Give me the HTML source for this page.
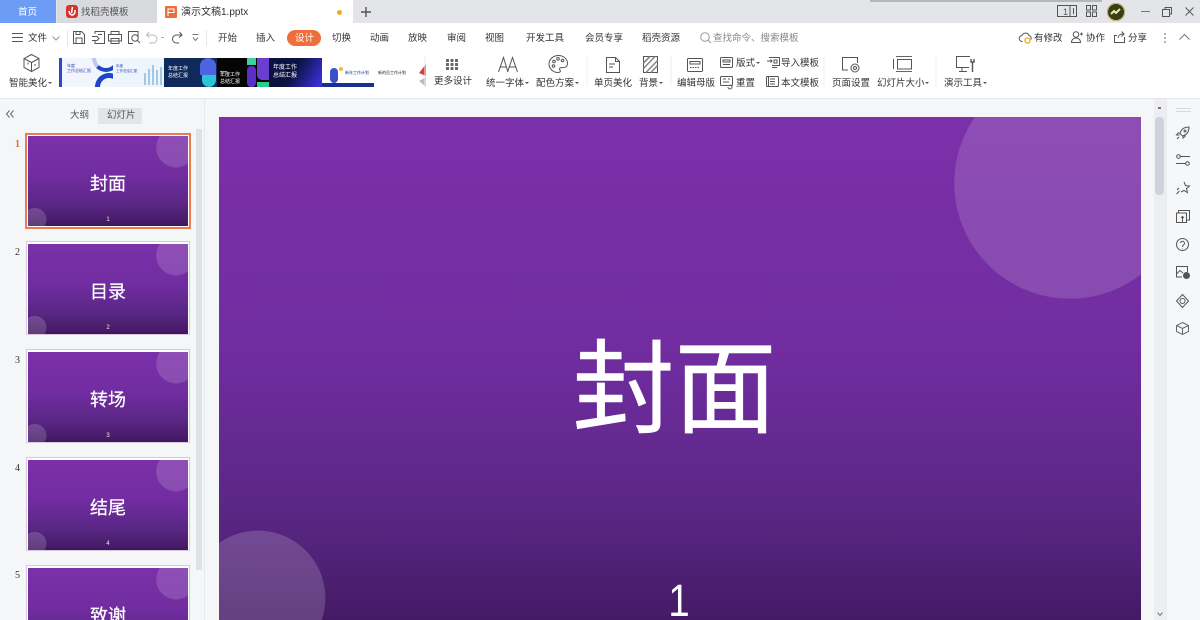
<!DOCTYPE html>
<html lang="zh-CN"><head><meta charset="utf-8"><title>演示文稿1.pptx</title>
<style>
html,body{margin:0;padding:0;width:1200px;height:620px;overflow:hidden;background:#f5f6f8}
body{position:relative;font-family:"Liberation Sans","Noto Sans CJK SC",sans-serif;color:#444;font-size:10px}
.a{position:absolute}
.t{position:absolute;white-space:nowrap;line-height:14px;font-size:9.500px;color:#444;margin-top:1px}
svg{position:absolute;overflow:visible;fill:none;stroke:#555;stroke-width:1}
.thumb{position:absolute;left:26px;width:162px;height:92px;border:1px solid #d6c9de;background:#fff;padding:0}
.slide{position:absolute;left:1px;top:2px;width:160px;height:90px;overflow:hidden;background:radial-gradient(circle 20px at 148px 11.500px,rgba(255,255,255,.15) 98%,transparent 100%),radial-gradient(circle 11.700px at 6.800px 83.500px,rgba(255,255,255,.17) 98%,transparent 100%),linear-gradient(#7b30a9 0,#722da1 43%,#632990 64%,#5a2785 76%,#451a65 97%,#3f1659 100%);background-size:160px 90px}
.slide b{position:absolute;left:0;right:0;top:34px;height:26px;text-align:center;font-weight:400;color:#fff;font-size:18px;line-height:26px;-webkit-text-stroke:.2px #fff;font-family:"Noto Sans CJK SC",sans-serif}
.slide u{position:absolute;left:0;right:0;top:80px;text-align:center;text-decoration:none;color:#eee;font-size:6px;line-height:8px}
.n{position:absolute;left:15px;font-size:10px;line-height:12px;color:#333;font-family:"Liberation Serif",serif}
.tmpl{position:absolute;top:58px;height:29px;overflow:hidden}
.tmpl .t{margin:0}
.dd{position:absolute;width:0;height:0;border:2px solid transparent;border-top:2px solid #555}
</style></head><body>

<!-- title bar -->
<div class="a" style="left:0;top:0;width:1200px;height:23px;background:#e3e5e9"></div>
<div class="a" style="left:0;top:0;width:56px;height:23px;background:#6d9cf5"></div>
<div class="t" style="left:18px;top:5px;color:#fff">首页</div>
<div class="a" style="left:57px;top:0;width:100px;height:23px;background:#d9dade"></div>
<div class="a" style="left:66px;top:5px;width:12px;height:13px;border-radius:3px;background:#d8322f"></div>
<svg style="left:66px;top:5px" width="12" height="13"><path d="M6.500 2 L5.500 8 M3 6 Q3.500 10 6.500 10 Q9.500 9 9 5" stroke="#fff" stroke-width="1.500"/></svg>
<div class="t" style="left:81px;top:5px;color:#555">找稻壳模板</div>
<div class="a" style="left:157px;top:0;width:196px;height:23px;background:#fff"></div>
<div class="a" style="left:165px;top:6px;width:12px;height:12px;background:#e8703f;border-radius:1px"></div>
<svg style="left:165px;top:6px" width="12" height="12"><path d="M3 10V3h6v3.500H3" stroke="#fff"/></svg>
<div class="t" style="left:181px;top:5px;color:#333;font-size:10px">演示文稿1.pptx</div>
<div class="a" style="left:337px;top:10px;width:5px;height:5px;border-radius:50%;background:#eeaa22"></div>
<svg style="left:360px;top:6px" width="12" height="12"><path d="M6 1v10M1 6h10" stroke="#555" stroke-width="1.400"/></svg>
<div class="a" style="left:870px;top:0;width:232px;height:2px;background:#b6b7ba"></div>
<svg style="left:1057px;top:5px" width="20" height="12"><rect x=".5" y=".5" width="19" height="11"/><path d="M13 .5v11M16.500 3v6"/></svg>
<div class="t" style="left:1063px;top:4px;font-size:9px;color:#555">1</div>
<svg style="left:1086px;top:5px" width="11" height="12"><rect x=".5" y=".5" width="4" height="4.500"/><rect x="6.500" y=".5" width="4" height="4.500"/><rect x=".5" y="7" width="4" height="4.500"/><rect x="6.500" y="7" width="4" height="4.500"/></svg>
<div class="a" style="left:1107px;top:3px;width:18px;height:18px;border-radius:50%;background:#3c3d10;box-shadow:0 0 0 1px #c5b97c inset"></div>
<svg style="left:1110px;top:7px" width="12" height="10"><path d="M1 7l3-3 2 2 4-4" stroke="#dfe8c8" stroke-width="2"/></svg>
<svg style="left:1141px;top:11px" width="9" height="2"><path d="M0 .5h9" stroke="#777"/></svg>
<svg style="left:1162px;top:7px" width="10" height="10"><rect x=".5" y="2.500" width="7" height="7"/><path d="M3 2.500V.5h6.500v6.500H7.500"/></svg>
<svg style="left:1185px;top:7px" width="9" height="9"><path d="M.5.500l8 8M8.500.500l-8 8"/></svg>

<!-- menu row -->
<div class="a" style="left:0;top:23px;width:1200px;height:75px;background:#fff"></div>
<svg style="left:12px;top:33px" width="11" height="9"><path d="M0 .5h11M0 4.500h11M0 8.500h11"/></svg>
<div class="t" style="left:28px;top:31px;color:#333">文件</div>
<svg style="left:52px;top:36px" width="8" height="5"><path d="M.5.500l3.500 3.500 3.500-3.500" stroke="#999"/></svg>
<svg style="left:67px;top:30px" width="1" height="16"><path d="M.5 0v16" stroke="#e6e6e6"/></svg>
<svg style="left:73px;top:31px" width="12" height="13"><path d="M.5.500h8l3 3v9H.500zM3 12.500V7h6v5.500M3 .5v3h4V.5"/></svg>
<svg style="left:92px;top:31px" width="13" height="13"><path d="M3 3V.5h9.500v12H3V10M0 5.500h5l2 2-2 2H0M6 3.500h4"/></svg>
<svg style="left:108px;top:31px" width="14" height="13"><path d="M3 3.500V.5h8v3M.5 3.500h13V10H.500zM3 7.500h8v5H3z"/></svg>
<svg style="left:128px;top:31px" width="13" height="13"><path d="M10 6V.5H.5v12H5"/><circle cx="7" cy="7" r="3.200"/><path d="M9.500 9.500l2.500 2.500"/></svg>
<svg style="left:146px;top:31px" width="13" height="13"><path d="M3 1L.5 4 3.500 6.500M1 4h6a4 4 0 0 1 0 8H3" stroke="#bbb"/></svg>
<svg style="left:161px;top:37px" width="4" height="2"><path d="M0 .5h3" stroke="#aaa"/></svg>
<svg style="left:171px;top:31px" width="12" height="13"><path d="M8.500 1l2.500 3-3 2.500M11 4H5.500a4 4 0 0 0 0 8H8"/></svg>
<svg style="left:192px;top:34px" width="7" height="8"><path d="M.5.500h6M1 3.500l2.500 3 2.500-3" stroke="#777"/></svg>
<svg style="left:206px;top:30px" width="1" height="16"><path d="M.5 0v16" stroke="#e6e6e6"/></svg>
<div class="t" style="left:218px;top:31px;color:#333">开始</div>
<div class="t" style="left:256px;top:31px;color:#333">插入</div>
<div class="a" style="left:287px;top:30px;width:34px;height:16px;border-radius:8px;background:#ef6f3c"></div>
<div class="t" style="left:295px;top:31px;color:#fff">设计</div>
<div class="t" style="left:332px;top:31px;color:#333">切换</div>
<div class="t" style="left:370px;top:31px;color:#333">动画</div>
<div class="t" style="left:408px;top:31px;color:#333">放映</div>
<div class="t" style="left:447px;top:31px;color:#333">审阅</div>
<div class="t" style="left:485px;top:31px;color:#333">视图</div>
<div class="t" style="left:526px;top:31px;color:#333">开发工具</div>
<div class="t" style="left:585px;top:31px;color:#333">会员专享</div>
<div class="t" style="left:642px;top:31px;color:#333">稻壳资源</div>
<svg style="left:700px;top:32px" width="12" height="12"><circle cx="5" cy="5" r="4.300" stroke="#999"/><path d="M8 8l3 3" stroke="#999"/></svg>
<div class="t" style="left:713px;top:31px;color:#888">查找命令、搜索模板</div>
<svg style="left:1019px;top:31px" width="13" height="13"><path d="M3.500 10.500a3 3 0 0 1-.5-6A3.800 3.800 0 0 1 10 4.500a3 3 0 0 1 2 4" stroke="#555"/><circle cx="8.500" cy="9.500" r="2.500" stroke="#eaa81c" stroke-width="1.300"/></svg>
<div class="t" style="left:1034px;top:31px;color:#333">有修改</div>
<svg style="left:1071px;top:31px" width="12" height="12"><circle cx="5" cy="3.500" r="2.800"/><path d="M.5 11.500c0-6 9-6 9 0zM9 3h3M10.500 1.500v3"/></svg>
<div class="t" style="left:1086px;top:31px;color:#333">协作</div>
<svg style="left:1114px;top:31px" width="12" height="12"><path d="M3 4.500H.5v7h10V6M4 7C4.500 4 6 3 9 3M7.500.500L10 3 7.500 5.500"/></svg>
<div class="t" style="left:1128px;top:31px;color:#333">分享</div>
<svg style="left:1164px;top:33px" width="2" height="10"><path d="M1 0v2M1 4v2M1 8v2" stroke="#666"/></svg>
<svg style="left:1179px;top:34px" width="11" height="6"><path d="M.5 5.500L5.500.5l5 5" stroke="#777"/></svg>

<!-- ribbon -->
<svg style="left:23px;top:54px" width="17" height="18"><path d="M8.500.5l7.500 4v9l-7.500 4-7.500-4v-9zM1 4.500l7.500 4 7.500-4M8.500 8.500v9"/><path d="M5 8.500v2M11 11h2" stroke="#555"/></svg>
<div class="t" style="left:9px;top:76px;color:#333">智能美化</div><div class="dd" style="left:48px;top:82px"></div>

<div class="tmpl" style="left:59px;width:54px;background:#f2f5fb">
 <div class="a" style="left:0;top:0;width:3px;height:29px;background:#2a48c9"></div>
 <div class="a" style="left:33px;top:-14px;width:20px;height:20px;border:4px solid #1d45c8;border-radius:50%;border-left-color:#bcc8ec;border-top-color:transparent;border-right-color:transparent"></div>
 <div class="a" style="left:36px;top:15px;width:18px;height:18px;border:5px solid #1d45c8;border-radius:50%;border-right-color:transparent;border-bottom-color:transparent"></div>
 <div class="t" style="left:8px;top:5px;font-size:4px;line-height:5px;color:#2a48c9">年度<br>工作总结汇报</div>
</div>
<div class="tmpl" style="left:113px;width:51px;background:#edf4fb">
 <div class="t" style="left:3px;top:6px;font-size:3.500px;line-height:5px;color:#2a48c9">年度<br>工作总结汇报</div>
 <svg style="left:30px;top:5px" width="20" height="22"><path d="M2 10v12M6 6v16M10 2v20M14 7v15M18 4v18" stroke="#a5c7e6" stroke-width="2"/></svg>
</div>
<div class="tmpl" style="left:164px;width:53px;background:#0f2a5a">
 <div class="a" style="left:36px;top:0;width:16px;height:17px;border-radius:8px 8px 0 0;background:#4d63e0"></div>
 <div class="a" style="left:38px;top:17px;width:14px;height:12px;background:#27c5d5;border-radius:0 0 7px 7px"></div>
 <div class="t" style="left:4px;top:8px;font-size:5px;line-height:7px;color:#fff">年度工作<br>总结汇报</div>
</div>
<div class="tmpl" style="left:217px;width:52px;background:#050505">
 <div class="a" style="left:30px;top:8px;width:9px;height:21px;background:#5c2ec9;border-radius:4px"></div>
 <div class="a" style="left:30px;top:0;width:9px;height:7px;background:#3ed29b"></div>
 <div class="a" style="left:40px;top:0;width:12px;height:22px;background:#6a3fd0;border-radius:0 0 0 5px"></div>
 <div class="a" style="left:40px;top:24px;width:12px;height:5px;background:#2fc98c"></div>
 <div class="a" style="left:3px;top:13px;width:7px;height:1px;background:#3ed29b"></div>
 <div class="t" style="left:3px;top:14px;font-size:5px;line-height:7px;color:#fff">年度工作<br>总结汇报</div>
</div>
<div class="tmpl" style="left:269px;width:53px;background:linear-gradient(120deg,#0b1240 45%,#3a2fd8 95%)">
 <div class="t" style="left:4px;top:6px;font-size:6px;line-height:8px;color:#fff">年度工作<br>总结汇报</div>
</div>
<div class="tmpl" style="left:322px;width:52px;background:#fff">
 <div class="a" style="left:0;top:25px;width:52px;height:4px;background:#1a2f92"></div>
 <div class="a" style="left:8px;top:10px;width:8px;height:15px;background:#3d4fc5;border-radius:4px"></div>
 <div class="a" style="left:17px;top:9px;width:4px;height:4px;background:#efbf2e;border-radius:50%"></div>
 <div class="t" style="left:23px;top:12px;font-size:4px;line-height:6px;color:#1a2f92">新年工作计划</div>
</div>
<div class="tmpl" style="left:374px;width:44px;background:#fff">
 <div class="t" style="left:4px;top:12px;font-size:4px;line-height:6px;color:#222">新的员工作计划</div>
</div>
<svg style="left:419px;top:64px" width="8" height="24"><path d="M7 0L0 9l7 3z" fill="#d8403c" stroke="none"/><path d="M7 13L0 17l7 6z" fill="#bdbdbd" stroke="none"/></svg>

<svg style="left:446px;top:59px" width="12" height="11"><g fill="#666" stroke="none"><rect width="3" height="3" rx=".6"/><rect x="4.500" width="3" height="3" rx=".6"/><rect x="9" width="3" height="3" rx=".6"/><rect y="4" width="3" height="3" rx=".6"/><rect x="4.500" y="4" width="3" height="3" rx=".6"/><rect x="9" y="4" width="3" height="3" rx=".6"/><rect y="8" width="3" height="3" rx=".6"/><rect x="4.500" y="8" width="3" height="3" rx=".6"/><rect x="9" y="8" width="3" height="3" rx=".6"/></g></svg>
<div class="t" style="left:434px;top:74px;color:#333">更多设计</div>
<svg style="left:498px;top:57px" width="20" height="15"><path d="M.5 15L5.500.5 10 15M2.500 10h6M9.500 15L14.500.5 19.500 15M11.500 10h6"/></svg>
<div class="t" style="left:486px;top:76px;color:#333">统一字体</div><div class="dd" style="left:525px;top:82px"></div>
<svg style="left:549px;top:55px" width="19" height="18"><path d="M9.500.5c5 0 9 3.500 9 8 0 4-4 4.500-6 4-2 0-2.500 1.500-1.500 2.500 1 1.500 0 2.500-2 2.500-4.500 0-9-3.500-9-8.500S4.500.5 9.500.5z"/><circle cx="5" cy="6.500" r="1.300"/><circle cx="9" cy="3.800" r="1.300"/><circle cx="13.500" cy="5.500" r="1.300"/><circle cx="4.500" cy="11" r="1.300"/></svg>
<div class="t" style="left:536px;top:76px;color:#333">配色方案</div><div class="dd" style="left:575px;top:82px"></div>
<svg style="left:606px;top:57px" width="14" height="16"><path d="M.5.500h9l4 4v11H.500zM9.500.5v4h4M3 7h6M3 10h4"/></svg>
<div class="t" style="left:594px;top:76px;color:#333">单页美化</div>
<svg style="left:643px;top:56px" width="15" height="17"><rect x=".5" y=".5" width="14" height="16"/><path d="M.5 7L7 .5M.5 12.500L12 .5M3 16.500L14.500 4.500M8 16.500l6.500-7" stroke="#888" stroke-width="1.600"/></svg>
<div class="t" style="left:639px;top:76px;color:#333">背景</div><div class="dd" style="left:659px;top:82px"></div>
<svg style="left:687px;top:58px" width="16" height="14"><rect x=".5" y=".5" width="15" height="13" rx="1"/><rect x="3" y="3.500" width="10" height="2.500"/><path d="M3 9.500h10" stroke-dasharray="1.500 1"/></svg>
<div class="t" style="left:677px;top:76px;color:#333">编辑母版</div>
<svg style="left:720px;top:57px" width="13" height="11"><rect x=".5" y=".5" width="12" height="10" rx="1"/><rect x="3" y="3" width="7" height="2"/><path d="M3 7.500h7"/></svg>
<div class="t" style="left:736px;top:56px;color:#333">版式</div><div class="dd" style="left:756px;top:62px"></div>
<svg style="left:720px;top:76px" width="13" height="12"><rect x=".5" y=".5" width="12" height="9" rx="1"/><path d="M3 3h3M8 3h2M3 6h6"/><path d="M8 11a2 2 0 1 0 2-2"/></svg>
<div class="t" style="left:736px;top:76px;color:#333">重置</div>
<svg style="left:767px;top:57px" width="13" height="11"><path d="M2 .5h10.500v8H5M0 4h5M3.500 2.500L5 4 3.500 5.500M7 3h3v3H7zM5 10.500h5"/></svg>
<div class="t" style="left:781px;top:56px;color:#333">导入模板</div>
<svg style="left:766px;top:76px" width="13" height="12"><rect x=".5" y=".5" width="12" height="10" rx="1"/><path d="M4 3h5M4 5.500h5M4 8h5M2.500 .5v10"/></svg>
<div class="t" style="left:781px;top:76px;color:#333">本文模板</div>
<svg style="left:842px;top:57px" width="18" height="16"><path d="M6 13H.5V.5h15V6"/><circle cx="13" cy="11" r="4"/><circle cx="13" cy="11" r="1.500"/></svg>
<div class="t" style="left:832px;top:76px;color:#333">页面设置</div>
<svg style="left:893px;top:56px" width="19" height="16"><path d="M3 .5h16M3 15.500h16" stroke="#666"/><rect x="4.500" y="3.500" width="14" height="9.500"/><path d="M.5 3v10"/></svg>
<div class="t" style="left:877px;top:76px;color:#333">幻灯片大小</div><div class="dd" style="left:925px;top:82px"></div>
<svg style="left:956px;top:56px" width="20" height="17"><path d="M14 .5H.5v11H13M6 11.500v4M3 15.500h8"/><path d="M15 3v3h3V3M16.500 6v10" stroke-width="1.400"/></svg>
<div class="t" style="left:944px;top:76px;color:#333">演示工具</div><div class="dd" style="left:983px;top:82px"></div>
<svg style="left:0;top:0;width:1200px;height:98px"><path d="M425 56v30M587 56v30M671 56v30M824 56v30M936 56v30" stroke="#efefef"/></svg>
<div class="a" style="left:0;top:98px;width:1200px;height:1px;background:#e6e7ea"></div>

<!-- left panel -->
<div class="a" style="left:204px;top:99px;width:1px;height:521px;background:#e8e9ec"></div>
<svg style="left:6px;top:110px" width="8" height="8"><path d="M3.500.5L.5 4l3 3.500M7.500.5L4.500 4l3 3.500" stroke="#666"/></svg>
<div class="t" style="left:70px;top:108px;color:#555">大纲</div>
<div class="a" style="left:98px;top:108px;width:44px;height:16px;background:#e1e4e8;border-radius:2px"></div>
<div class="t" style="left:107px;top:108px;color:#555">幻灯片</div>
<div class="a" style="left:196px;top:129px;width:6px;height:441px;background:#e0e1e4"></div>

<div class="n" style="top:139px;color:#d0703a;font-weight:700">1</div>
<div class="thumb" style="top:133px;left:25px;border:2px solid #ee7a50"><div class="slide" style="top:1px"><b>封面</b><u>1</u></div></div>
<div class="n" style="top:247px">2</div>
<div class="thumb" style="top:241px"><div class="slide"><b>目录</b><u>2</u></div></div>
<div class="n" style="top:355px">3</div>
<div class="thumb" style="top:349px"><div class="slide"><b>转场</b><u>3</u></div></div>
<div class="n" style="top:463px">4</div>
<div class="thumb" style="top:457px"><div class="slide"><b>结尾</b><u>4</u></div></div>
<div class="n" style="top:570px">5</div>
<div class="thumb" style="top:565px;height:54px;border-bottom:0"><div class="slide" style="height:52px"><b style="height:18px;overflow:hidden">致谢</b></div></div>

<!-- main slide -->
<div class="a" style="left:219px;top:117px;width:922px;height:503px;overflow:hidden;background:radial-gradient(circle 116px at 851px 66px,rgba(255,255,255,.14) 99.500%,transparent 100%),radial-gradient(circle 67.500px at 39px 481px,rgba(255,255,255,.17) 99.500%,transparent 100%),linear-gradient(#7b30a9 0,#722da1 43%,#632990 64%,#5a2785 76%,#451a65 97%,#3f1659 100%);background-size:922px 518px">
 <div class="a" style="left:0;top:200px;width:911px;height:130px;text-align:center;color:#fff;font-size:102px;line-height:130px;-webkit-text-stroke:.5px #fff;font-family:'Noto Sans CJK SC',sans-serif">封面</div>
 <div class="a" style="left:0;top:461px;width:920px;height:42px;overflow:hidden;text-align:center;color:#fff;font-size:45px;line-height:46px;font-family:'Liberation Sans',sans-serif;transform:scaleX(.85);transform-origin:460px 50%">1</div>
</div>

<!-- right scroll + side -->
<div class="a" style="left:1154px;top:99px;width:12px;height:521px;background:#eceef2"></div>
<div class="a" style="left:1158px;top:107px;width:3px;height:2px;background:#777"></div>
<div class="a" style="left:1155px;top:117px;width:9px;height:78px;border-radius:4px;background:#cfd2da"></div>
<div class="a" style="left:1166px;top:99px;width:34px;height:521px;background:#f6f7f9;border-left:1px solid #ececef;box-sizing:border-box"></div>
<svg style="left:1176px;top:108px" width="15" height="4"><path d="M0 .5h15M0 3.500h15" stroke="#d8d8dc"/></svg>
<svg style="left:1176px;top:126px" width="14" height="14"><path d="M13 1C8 1 5 3.500 4 7.500L6.500 10C10.500 9 13 6 13 1zM4.500 7H2L.5 9h3M7 9.500V12l2-1.500V8M1 13l2-2"/><circle cx="9" cy="5" r="1"/></svg>
<svg style="left:1176px;top:154px" width="14" height="12"><circle cx="2.500" cy="2.500" r="1.800"/><path d="M4.500 2.500H14M0 9.500h9.500"/><circle cx="11.500" cy="9.500" r="1.800"/></svg>
<svg style="left:1176px;top:181px" width="14" height="14"><path d="M8 .8l1.500 3.800 4 .4-3 2.600.9 4-3.400-2.200L5 11M.5 13l3-3M1 9l2-2"/></svg>
<svg style="left:1176px;top:210px" width="14" height="13"><path d="M2.500 3V.5h11V10H11M.5 3h10v9.500H.500zM5 8l1.500-1.500L8 8M6.500 6.500v6"/></svg>
<svg style="left:1176px;top:238px" width="13" height="13"><circle cx="6.500" cy="6.500" r="6"/><path d="M4.500 5a2 2 0 1 1 3 2c-1 .5-1 1-1 2M6.500 10.500v.6"/></svg>
<svg style="left:1176px;top:266px" width="14" height="13"><path d="M6 11H.5V.5h11V6M.5 8L4 4.500 7 7"/><circle cx="10.500" cy="9.500" r="3" fill="#555"/></svg>
<svg style="left:1176px;top:294px" width="13" height="14"><path d="M6.500.5l6 6.500-6 6.500L.5 7z"/><circle cx="6.500" cy="7" r="2.500"/></svg>
<svg style="left:1176px;top:322px" width="13" height="13"><path d="M6.500.5l6 3v6l-6 3-6-3v-6zM.5 3.500l6 3 6-3M6.500 6.500v6" stroke="#666"/></svg>
<svg style="left:1157px;top:612px" width="6" height="4"><path d="M.5.500L3 3.500 5.500.5" stroke="#777"/></svg>
</body></html>
